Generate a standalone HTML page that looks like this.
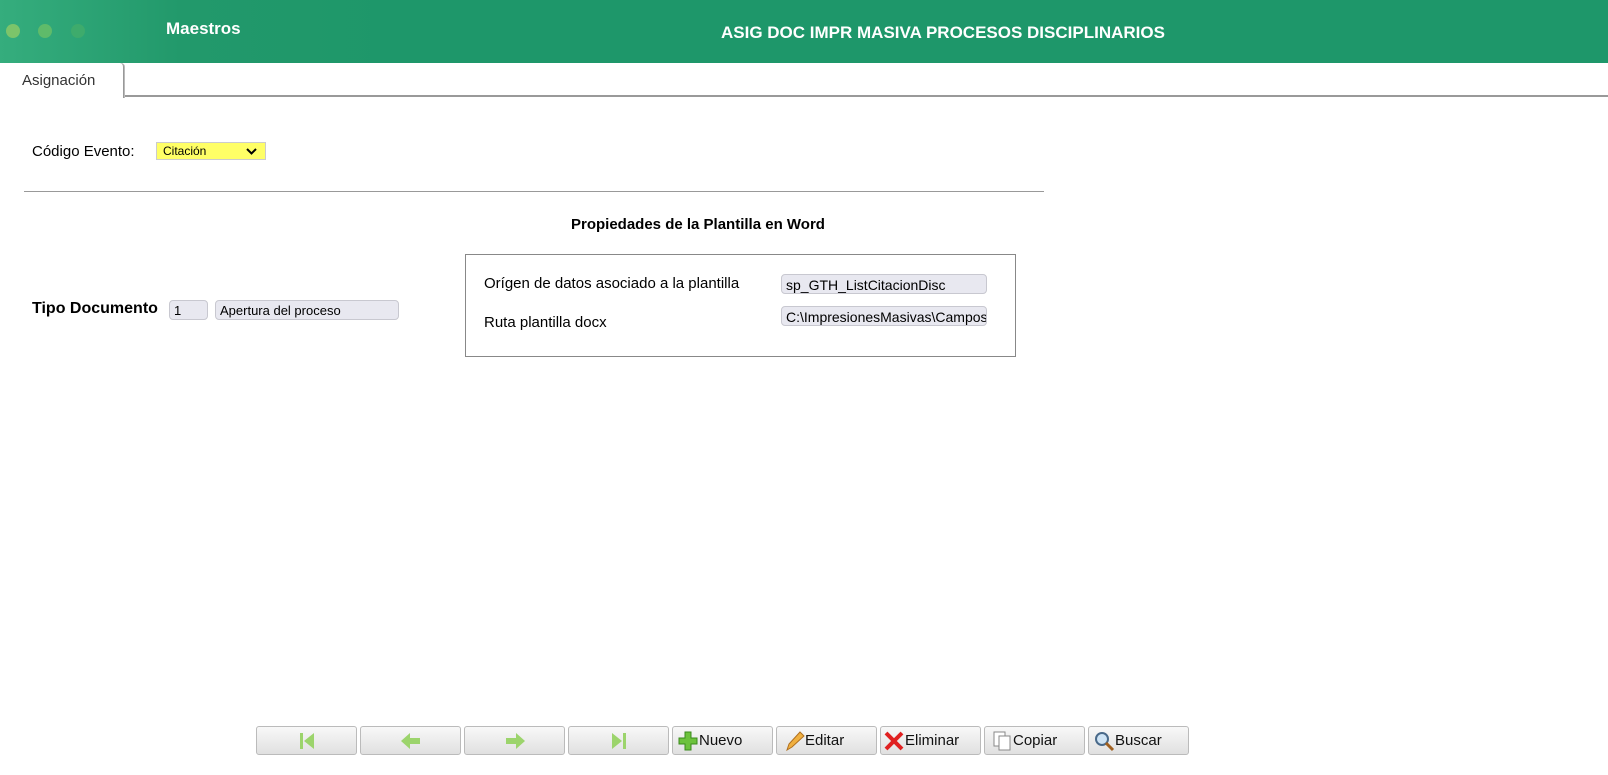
<!DOCTYPE html>
<html><head><meta charset="utf-8"><style>
*{box-sizing:border-box;margin:0;padding:0}
body{width:1608px;height:775px;background:#fff;font-family:"Liberation Sans",sans-serif;position:relative;overflow:hidden;color:#000}
.hdr{position:absolute;left:0;top:0;width:1608px;height:63px;background:linear-gradient(90deg,#35ad7d 0px,#22996b 180px,#1e976a 400px,#1e976a 100%)}
.dot{position:absolute;top:24px;width:14px;height:14px;border-radius:50%}
.t1{position:absolute;left:166px;top:19px;color:#fff;font-weight:bold;font-size:17px}
.t2{position:absolute;left:721px;top:23px;color:#fff;font-weight:bold;font-size:17px}
.tab{position:absolute;left:0;top:63px;width:124px;height:35px;border:1px solid #999;border-bottom:none;border-top:none;border-left:none;border-radius:0 4px 0 0;background:#fff;z-index:2;font-size:15px;color:#333;padding:9px 0 0 22px;box-shadow:1px 0 0 #bbb}
.tabline{position:absolute;left:123px;top:95px;width:1485px;height:2px;background:#999}
.lbl{position:absolute;font-size:15px}
.inp{position:absolute;background:#e8e8f0;border:1px solid #c8c8d0;border-radius:4px;font-size:13px;padding:2px 4px;height:20px;white-space:nowrap;overflow:hidden}
.btn{position:absolute;top:726px;width:101px;height:29px;border:1px solid #bbb;border-radius:3px;background:linear-gradient(#f8f8f8,#e0e0e0);font-size:15px;display:flex;align-items:center;justify-content:center;color:#111}
</style></head><body>
<div class="hdr">
<div class="dot" style="left:6px;background:#7cc46a"></div>
<div class="dot" style="left:38px;background:#5fbb6a"></div>
<div class="dot" style="left:71px;background:#3eab6c"></div>
<div class="t1">Maestros</div>
<div class="t2">ASIG DOC IMPR MASIVA PROCESOS DISCIPLINARIOS</div>
</div>
<div class="tab">Asignación</div>
<div class="tabline"></div>
<div class="lbl" style="left:32px;top:143px">Código Evento:</div>
<div style="position:absolute;left:156px;top:142px;width:110px;height:18px;background:#ffff66;border:1px solid #ccc;font-size:12px;padding:1px 6px">Citación<svg style="position:absolute;right:8px;top:5px" width="11" height="8" viewBox="0 0 11 8"><path d="M1 1l4.5 4.5L10 1" stroke="#000" stroke-width="2" fill="none"/></svg></div>
<div style="position:absolute;left:24px;top:191px;width:1020px;height:1px;background:#999"></div>
<div class="lbl" style="left:571px;top:216px;font-weight:bold">Propiedades de la Plantilla en Word</div>
<div class="lbl" style="left:32px;top:300px;font-weight:bold;font-size:16px">Tipo Documento</div>
<div class="inp" style="left:169px;top:300px;width:39px">1</div>
<div class="inp" style="left:215px;top:300px;width:184px">Apertura del proceso</div>
<div style="position:absolute;left:465px;top:254px;width:551px;height:103px;border:1px solid #888"></div>
<div class="lbl" style="left:484px;top:275px">Orígen de datos asociado a la plantilla</div>
<div class="lbl" style="left:484px;top:314px">Ruta plantilla docx</div>
<div class="inp" style="left:781px;top:274px;width:206px;font-size:14px">sp_GTH_ListCitacionDisc</div>
<div class="inp" style="left:781px;top:306px;width:206px;font-size:14px">C:\ImpresionesMasivas\Campos</div>

<div class="btn" style="left:256px"><svg width="20" height="20"><rect x="3" y="2" width="3" height="16" fill="#9cd46c"/><path d="M17 2L7 10l10 8z" fill="#9cd46c"/></svg></div>
<div class="btn" style="left:360px"><svg width="24" height="20"><path d="M2 10L11 2v5h10v6H11v5z" fill="#9cd46c"/></svg></div>
<div class="btn" style="left:464px"><svg width="24" height="20"><path d="M22 10L13 2v5H3v6h10v5z" fill="#9cd46c"/></svg></div>
<div class="btn" style="left:568px"><svg width="20" height="20"><rect x="14" y="2" width="3" height="16" fill="#9cd46c"/><path d="M3 2l10 8-10 8z" fill="#9cd46c"/></svg></div>
<div class="btn" style="left:672px;justify-content:flex-start;padding-left:4px"><svg width="22" height="22"><path d="M8 2h6v6h6v6h-6v6H8v-6H2V8h6z" fill="#6cc23c" stroke="#3a8a1c"/></svg>Nuevo</div>
<div class="btn" style="left:776px;justify-content:flex-start;padding-left:6px"><svg width="22" height="22"><path d="M4 20l2-6L17 2l4 4L9 17z" fill="#f0b040" stroke="#b07020"/></svg>Editar</div>
<div class="btn" style="left:880px;justify-content:flex-start;padding-left:2px"><svg width="22" height="22"><path d="M3 3l16 16M19 3L3 19" stroke="#e02020" stroke-width="4"/></svg>Eliminar</div>
<div class="btn" style="left:984px;justify-content:flex-start;padding-left:6px"><svg width="22" height="22"><rect x="3" y="2" width="11" height="14" fill="#fff" stroke="#888"/><rect x="8" y="6" width="11" height="14" fill="#fff" stroke="#888"/></svg>Copiar</div>
<div class="btn" style="left:1088px;justify-content:flex-start;padding-left:4px"><svg width="22" height="22"><circle cx="9" cy="9" r="6" fill="#cfe4f5" stroke="#4a6a8a" stroke-width="2"/><path d="M13 13l7 7" stroke="#a06020" stroke-width="3"/></svg>Buscar</div>
</body></html>
